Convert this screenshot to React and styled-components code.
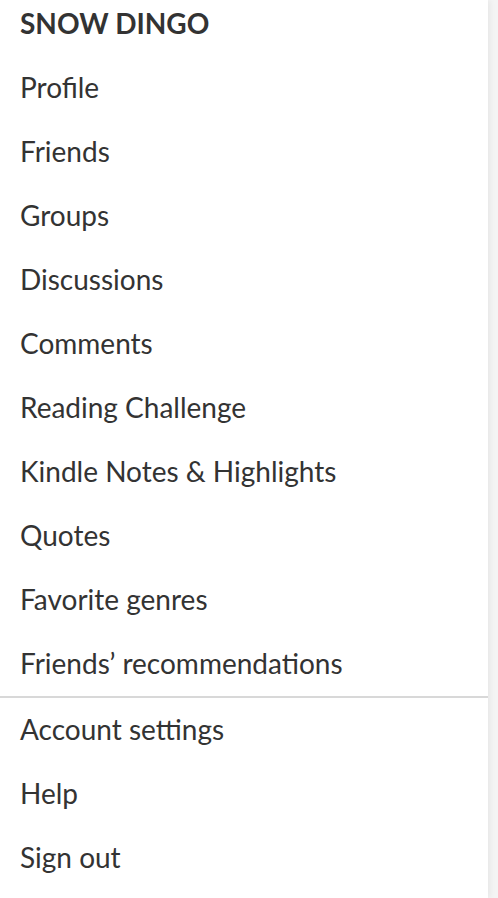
import React from "react";
import styled, { createGlobalStyle } from "styled-components";

const Global = createGlobalStyle`
  html, body { margin: 0; padding: 0; background: #f4f4f4; }
  body { font-family: Lato, "Liberation Sans", sans-serif; color: #333333; }
  #root { min-height: 898px; }
`;

const Panel = styled.nav`
  width: 488px;
  min-height: 898px;
  background: #ffffff;
  box-shadow: 2px 0 6px rgba(0, 0, 0, 0.06);
  display: flex;
  flex-direction: column;
`;

const Header = styled.div`
  box-sizing: border-box;
  height: 48px;
  padding: 0 20px 2px;
  margin-bottom: 8px;
  display: flex;
  align-items: center;
  font-weight: 700;
  font-size: 28px;
  line-height: 32px;
  text-transform: uppercase;
  color: #333333;
`;

const List = styled.ul`
  list-style: none;
  margin: 0;
  padding: 0;
`;

const Item = styled.li`
  box-sizing: border-box;
  height: 64px;
  padding: 0 20px 2px;
  display: flex;
  align-items: center;
  font-size: 28px;
  line-height: 32px;
  color: #333333;
`;

const Divider = styled.hr`
  margin: 0;
  border: none;
  height: 2px;
  background: #d8d8d8;
`;

const main = [
  "Profile",
  "Friends",
  "Groups",
  "Discussions",
  "Comments",
  "Reading Challenge",
  "Kindle Notes & Highlights",
  "Quotes",
  "Favorite genres",
  "Friends\u2019 recommendations",
];
const account = ["Account settings", "Help", "Sign out"];

export default function App() {
  return (
    <>
      <Global />
      <Panel>
        <Header>Snow Dingo</Header>
        <List>
          {main.map((t) => (
            <Item key={t}>{t}</Item>
          ))}
        </List>
        <Divider />
        <List>
          {account.map((t) => (
            <Item key={t}>{t}</Item>
          ))}
        </List>
      </Panel>
    </>
  );
}
